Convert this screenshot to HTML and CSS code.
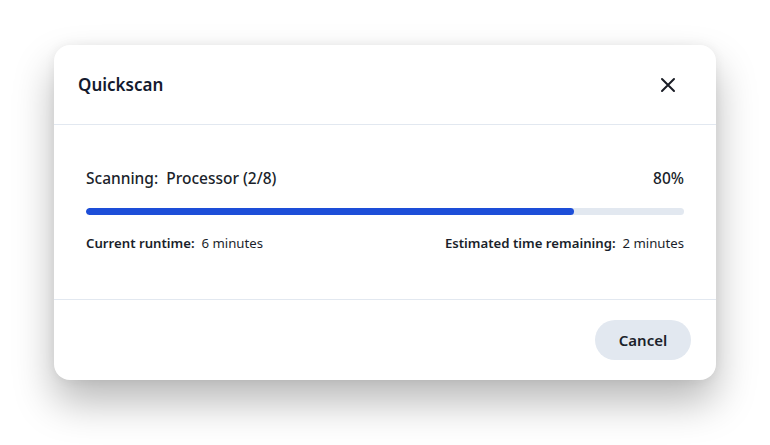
FILE: index.html
```html
<!DOCTYPE html>
<html lang="en">
<head>
  <meta charset="UTF-8" />
  <meta name="viewport" content="width=device-width, initial-scale=1" />
  <title>Quickscan</title>
  <link rel="stylesheet" href="styles.css">
</head>
<body>

<div class="dialog">
  <div class="dialog-head">
    <h2>Quickscan</h2>
    <button class="close-btn" aria-label="Close">
      <svg width="16" height="16" viewBox="0 0 16 16"><path d="M2 2L14 14M14 2L2 14" stroke="#1a1d26" stroke-width="2" stroke-linecap="round"/></svg>
    </button>
  </div>

  <div class="dialog-body">
    <div class="scan-row">
      <span>Scanning:&nbsp; Processor (2/8)</span>
      <span>80%</span>
    </div>
    <div class="track"><div class="fill" style="width: 81.6%"></div></div>
    <div class="stats">
      <span><b>Current runtime:</b>&nbsp; 6 minutes</span>
      <span><b>Estimated time remaining:</b>&nbsp; 2 minutes</span>
    </div>
  </div>

  <div class="dialog-foot">
    <button class="cancel-btn">Cancel</button>
  </div>
</div>

</body>
</html>
```

FILE: styles.css
```css
html, body { height: 100%; }
body { margin: 0; min-height: 445px; background: #ffffff; font-family: "Noto Sans", sans-serif; color: #1b1f2b; padding-top: 45px; box-sizing: border-box; }
.dialog { width: 662px; margin: 0 0 0 54px; background: #fff; border-radius: 16px; box-shadow: 0 22px 40px rgba(0,0,0,0.28), 0 0 12px rgba(0,0,0,0.06); overflow: hidden; }
.dialog-head { height: 79px; display: flex; align-items: center; justify-content: space-between; padding: 0 40px 0 24px; border-bottom: 1px solid #e2e8f0; }
.dialog-head h2 { margin: 0; font-size: 17px; font-weight: 600; color: #141a2e; }
.close-btn { background: none; border: none; padding: 0; width: 16px; height: 16px; cursor: pointer; display: flex; }
.dialog-body { height: 175px; padding: 0 32px; border-bottom: 1px solid #e2e8f0; box-sizing: border-box; }
.scan-row { display: flex; justify-content: space-between; font-size: 15.5px; font-weight: 500; padding-top: 42px; line-height: 22px; }
.track { height: 7px; background: #e2e8f0; border-radius: 4px; margin-top: 19px; overflow: hidden; }
.fill { height: 100%; background: #1d4ed8; border-radius: 4px; }
.stats { display: flex; justify-content: space-between; font-size: 13.2px; margin-top: 19px; line-height: 18px; }
.stats b { font-weight: 600; }
.dialog-foot { display: flex; justify-content: flex-end; padding: 20px 25px 20px; }
.cancel-btn { width: 96px; height: 40px; border: none; border-radius: 20px; background: #e2e8f0; font-family: inherit; font-size: 15px; font-weight: 600; color: #1b1f2b; cursor: pointer; }
```
